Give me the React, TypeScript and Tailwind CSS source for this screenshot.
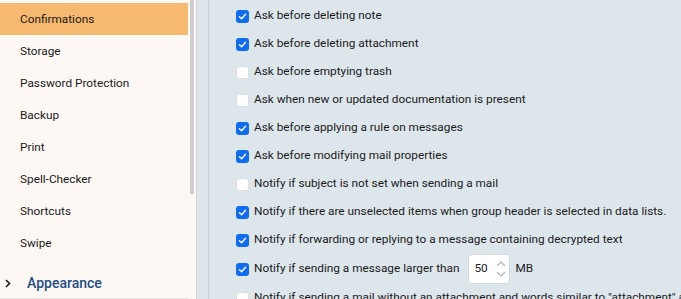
import React from 'react';

const navItems = [
  'Confirmations',
  'Storage',
  'Password Protection',
  'Backup',
  'Print',
  'Spell-Checker',
  'Shortcuts',
  'Swipe',
];

const options: { label: string; checked: boolean; spin?: boolean }[] = [
  { label: 'Ask before deleting note', checked: true },
  { label: 'Ask before deleting attachment', checked: true },
  { label: 'Ask before emptying trash', checked: false },
  { label: 'Ask when new or updated documentation is present', checked: false },
  { label: 'Ask before applying a rule on messages', checked: true },
  { label: 'Ask before modifying mail properties', checked: true },
  { label: 'Notify if subject is not set when sending a mail', checked: false },
  { label: 'Notify if there are unselected items when group header is selected in data lists.', checked: true },
  { label: 'Notify if forwarding or replying to a message containing decrypted text', checked: true },
  { label: 'Notify if sending a message larger than', checked: true, spin: true },
  { label: 'Notify if sending a mail without an attachment and words similar to "attachment" are found', checked: false },
];

const Checkbox: React.FC<{ checked: boolean }> = ({ checked }) =>
  checked ? (
    <span className="flex h-[13px] w-[13px] shrink-0 items-center justify-center rounded-[3px] bg-[#0f6cf2]">
      <svg width="9" height="9" viewBox="0 0 10 10" fill="none">
        <path d="M1.6 5.2 L4 7.4 L8.4 2.6" stroke="white" strokeWidth="1.6" strokeLinecap="round" strokeLinejoin="round" />
      </svg>
    </span>
  ) : (
    <span className="h-[13px] w-[13px] shrink-0 rounded-[3px] border border-[#d9dee2] bg-white" />
  );

const SpinBox: React.FC = () => (
  <div className="ml-[4px] flex h-[30px] w-[42px] shrink-0 items-center justify-between rounded-[4px] border border-[#d4d9dd] bg-white pl-[5px] pr-[3px]">
    <span>50</span>
    <svg width="10" height="22" viewBox="0 0 10 22" fill="none" stroke="#a8adb2" strokeWidth="1.1" strokeLinecap="round">
      <path d="M1.5 7.5 L5 4 L8.5 7.5" />
      <path d="M1.5 14.5 L5 18 L8.5 14.5" />
    </svg>
  </div>
);

export default function App() {
  return (
    <div
      className="flex h-[299px] w-[681px] overflow-hidden bg-[#dde6eb] text-[#1a1a1a]"
      style={{ fontFamily: 'Roboto, "Noto Sans", sans-serif' }}
    >
      {/* sidebar */}
      <aside className="flex w-[197px] shrink-0 border-r border-[#cfd3d6] bg-[#fdf8f4]">
        <div className="flex w-[188px] flex-col pt-[3px]">
          {navItems.map((item, i) => (
            <div
              key={item}
              className={
                'flex h-[32px] shrink-0 items-center pl-[20px] pt-[1px] text-[11.8px] ' +
                (i === 0 ? 'bg-[#f7b870]' : '')
              }
            >
              {item}
            </div>
          ))}
          <div className="mt-[8px] flex h-[32px] shrink-0 items-center border-b border-[#e3e3e3] pt-[1px] pr-[6px]">
            <svg width="6" height="9" viewBox="0 0 6 9" className="ml-[5px]" fill="none" stroke="#1a1a1a" strokeWidth="1.6">
              <path d="M1 1 L4.5 4.5 L1 8" />
            </svg>
            <span className="ml-[16px] text-[14px] font-medium text-[#1d4f86]">Appearance</span>
          </div>
        </div>
        <div className="flex w-[8px] justify-center">
          <div className="h-[194px] w-[4px] bg-[#cfcfcf]" />
        </div>
      </aside>

      {/* content */}
      <main className="flex flex-1 pl-[11px]">
        <div className="flex flex-1 flex-col border-l border-[#c9cfd3] pl-[27px] pt-[2px] text-[11.8px]">
          {options.map((o) => (
            <div
              key={o.label}
              className={'flex shrink-0 items-center gap-[5px] whitespace-nowrap ' + (o.spin ? 'h-[30px]' : 'h-[28px]')}
            >
              <Checkbox checked={o.checked} />
              <span>{o.label}</span>
              {o.spin && (
                <>
                  <SpinBox />
                  <span>MB</span>
                </>
              )}
            </div>
          ))}
        </div>
      </main>
    </div>
  );
}
